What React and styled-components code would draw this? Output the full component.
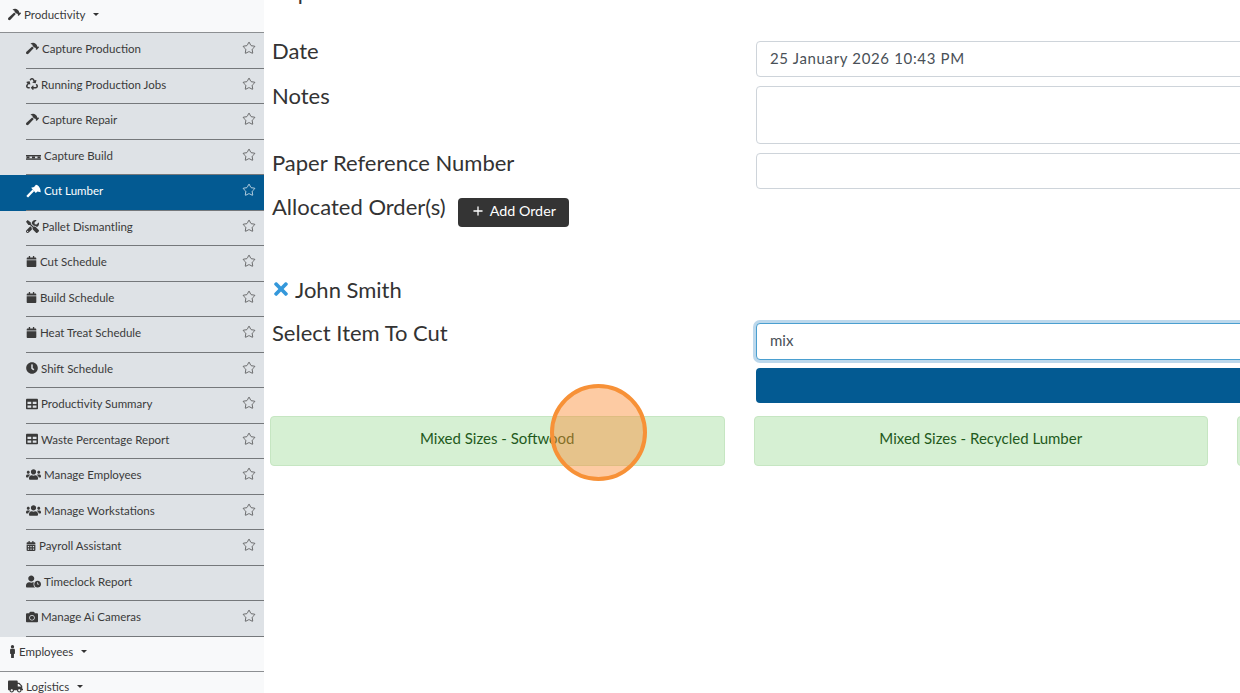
import styled, { createGlobalStyle } from 'styled-components'
import {
  FaHammer, FaRecycle, FaTools, FaCalendar, FaClock, FaTable, FaUsers,
  FaCalendarAlt, FaUserClock, FaCamera, FaMale, FaTruck, FaTimes,
} from 'react-icons/fa'
import { Star as StarIcon, Plus } from 'lucide-react'

const GlobalStyle = createGlobalStyle`
  html, body { margin: 0; height: 100%; overflow: hidden; background: #fff; }
  * { box-sizing: border-box; }
  body { font-family: Lato, "Noto Sans", sans-serif; color: #333; }
`

const AxeIcon = () => (
  <svg width="15" height="14" viewBox="0 0 16 14" fill="currentColor">
    <path d="M0.3 12.4 L7 5.4 L8.8 7 L2.2 14 Z" />
    <path d="M5.5 3.6 L8.6 2.8 L10.6 0.4 C13.6 1 15.7 4 15.7 8.2 L12.2 7.6 L10.4 9.2 Z" />
  </svg>
)

const PalletIcon = () => (
  <svg width="15" height="13" viewBox="0 0 15 13" fill="currentColor">
    <rect x="0" y="6" width="15" height="1.4" />
    <rect x="0.5" y="7.4" width="3" height="2" />
    <rect x="6" y="7.4" width="3" height="2" />
    <rect x="11.5" y="7.4" width="3" height="2" />
    <rect x="0" y="9.4" width="15" height="1.4" />
  </svg>
)

const items = [
  { label: 'Capture Production', Icon: FaHammer },
  { label: 'Running Production Jobs', Icon: FaRecycle, size: 12 },
  { label: 'Capture Repair', Icon: FaHammer },
  { label: 'Capture Build', Icon: PalletIcon },
  { label: 'Cut Lumber', Icon: AxeIcon, active: true },
  { label: 'Pallet Dismantling', Icon: FaTools },
  { label: 'Cut Schedule', Icon: FaCalendar, size: 11 },
  { label: 'Build Schedule', Icon: FaCalendar, size: 11 },
  { label: 'Heat Treat Schedule', Icon: FaCalendar, size: 11 },
  { label: 'Shift Schedule', Icon: FaClock, size: 12 },
  { label: 'Productivity Summary', Icon: FaTable, size: 12 },
  { label: 'Waste Percentage Report', Icon: FaTable, size: 12 },
  { label: 'Manage Employees', Icon: FaUsers, size: 15 },
  { label: 'Manage Workstations', Icon: FaUsers, size: 15 },
  { label: 'Payroll Assistant', Icon: FaCalendarAlt, size: 10 },
  { label: 'Timeclock Report', Icon: FaUserClock, size: 15, noStar: true },
  { label: 'Manage Ai Cameras', Icon: FaCamera, size: 12 },
]

const Page = styled.div`
  display: flex;
  width: 1240px;
  height: 693px;
  overflow: hidden;
  position: relative;
`

const Sidebar = styled.nav`
  flex: 0 0 264px;
  background: #f8f9fa;
  height: 693px;
  overflow: hidden;
`

const Section = styled.div`
  display: flex;
  align-items: center;
  gap: 3px;
  height: ${p => p.$height}px;
  padding: 0 0 4px 8px;
  font-size: 11.5px;
  color: #3a3a3a;
  border-bottom: 1px solid #8c8f92;
`

const Caret = styled.span`
  width: 0;
  height: 0;
  margin-left: 5px;
  border-top: 3.5px solid #333;
  border-left: 3.5px solid transparent;
  border-right: 3.5px solid transparent;
`

const Row = styled.div`
  background: ${p => (p.$active ? '#035a92' : '#dee2e6')};
  color: ${p => (p.$active ? '#fff' : '#3a3a3a')};
  height: 35.5px;
`

const RowInner = styled.div`
  display: flex;
  align-items: center;
  gap: 3px;
  height: 100%;
  margin-left: 26px;
  padding: 0 8px 3px 0;
  font-size: 11.5px;
  border-bottom: 1px solid #75787b;
`

const Label = styled.span`
  flex: 1;
`

const Star = styled(StarIcon)`
  width: 14px;
  height: 14px;
  stroke-width: 1.2;
  margin-top: -1px;
`

const MaleIcon = styled(FaMale)`
  width: 7px;
  height: 13px;
  margin-left: 1px;
`

const Main = styled.main`
  flex: 1;
  min-width: 0;
  overflow: hidden;
  padding: 0 0 0 8px;
`

const Heading = styled.div`
  margin-top: -21px;
  height: 62px;
  font-size: 22px;
  line-height: 26px;
  color: #333;
`

const FormRow = styled.div`
  display: flex;
  align-items: flex-start;
  margin-bottom: ${p => p.$mb ?? 9}px;
`

const FieldLabel = styled.div`
  flex: 0 0 484px;
  font-size: 22px;
  line-height: 20px;
  color: #333;
  display: flex;
  align-items: flex-start;
`

const Input = styled.div`
  flex: 0 0 600px;
  height: ${p => p.$height || 36}px;
  border: 1px solid #ced4da;
  border-radius: 4px;
  padding: 0 13px 2px;
  display: flex;
  align-items: center;
  font-size: 15px;
  color: #495057;
  background: #fff;
  ${p => p.$spaced && 'letter-spacing: 0.65px;'}
  ${p => p.$focus && 'border-color: #4a9fd0; box-shadow: 0 0 0 3px #bcd8ec; padding-bottom: 4px;'}
`

const AddButton = styled.button`
  display: inline-flex;
  align-items: center;
  gap: 5px;
  height: 29px;
  margin: 1px 0 0 12px;
  padding: 0 13px 3px;
  border: none;
  border-radius: 4px;
  background: #343434;
  color: #fff;
  font: inherit;
  font-size: 14.3px;
`

const PlusIcon = styled(Plus)`
  width: 14px;
  height: 14px;
  stroke-width: 2.2;
`

const Person = styled.div`
  display: flex;
  align-items: center;
  gap: 4px;
  margin: 47px 0 19px 0;
  height: 30px;
  font-size: 22px;
  color: #333;
`

const Blue = styled(FaTimes)`
  color: #3498db;
  width: 20px;
  height: 20px;
  margin-left: -1px;
`

const SearchButton = styled.div`
  margin-left: 484px;
  width: 600px;
  height: 35px;
  background: #035a92;
  border-radius: 4px;
`

const Cards = styled.div`
  display: flex;
  gap: 29px;
  margin: 13px 0 0 -2px;
  width: 1100px;
`

const Card = styled.div`
  flex: 0 0 454.5px;
  height: 50px;
  display: flex;
  align-items: center;
  justify-content: center;
  padding-bottom: 7px;
  background: #d6f0d3;
  border: 1px solid #c6e6c2;
  border-radius: 4px;
  color: #1f5a1c;
  font-size: 15px;
`

const Pointer = styled.div`
  position: absolute;
  left: 550px;
  top: 384px;
  width: 97px;
  height: 97px;
  border-radius: 50%;
  border: 4px solid #f79137;
  background: rgba(250, 140, 50, 0.45);
`

export default function App() {
  return (
    <>
      <GlobalStyle />
      <Page>
        <Sidebar>
          <Section $height={33}>
            <FaHammer size={13} /> Productivity <Caret />
          </Section>
          {items.map(({ label, Icon, size = 13, active, noStar }) => (
            <Row key={label} $active={active}>
              <RowInner>
                <Icon size={size} />
                <Label>{label}</Label>
                {!noStar && <Star />}
              </RowInner>
            </Row>
          ))}
          <Section $height={35}>
            <MaleIcon /> Employees <Caret />
          </Section>
          <Section $height={35}>
            <FaTruck size={15} /> Logistics <Caret />
          </Section>
        </Sidebar>
        <Main>
          <Heading>Capture</Heading>
          <FormRow>
            <FieldLabel>Date</FieldLabel>
            <Input $spaced>25 January 2026 10:43 PM</Input>
          </FormRow>
          <FormRow>
            <FieldLabel>Notes</FieldLabel>
            <Input $height={58} />
          </FormRow>
          <FormRow $mb={8}>
            <FieldLabel>Paper Reference Number</FieldLabel>
            <Input />
          </FormRow>
          <FieldLabel>
            Allocated Order(s)
            <AddButton><PlusIcon /> Add Order</AddButton>
          </FieldLabel>
          <Person><Blue /> John Smith</Person>
          <FormRow $mb={8}>
            <FieldLabel>Select Item To Cut</FieldLabel>
            <Input $focus $height={37}>mix</Input>
          </FormRow>
          <SearchButton />
          <Cards>
            <Card>Mixed Sizes - Softwood</Card>
            <Card>Mixed Sizes - Recycled Lumber</Card>
            <Card />
          </Cards>
        </Main>
        <Pointer />
      </Page>
    </>
  )
}
